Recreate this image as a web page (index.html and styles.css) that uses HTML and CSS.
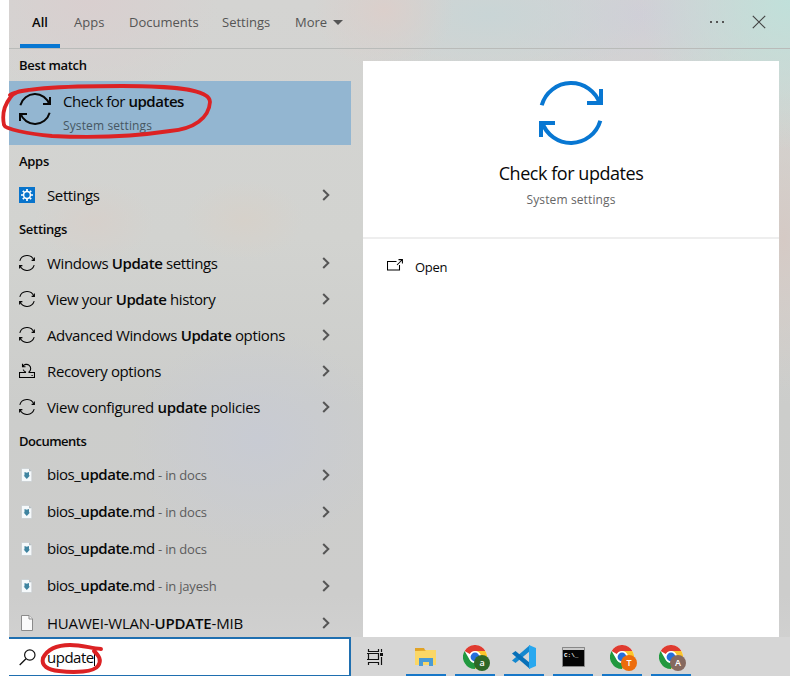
FILE: index.html
```html
<!DOCTYPE html>
<html lang="en">
<head>
<meta charset="utf-8">
<title>Search</title>
<link rel="stylesheet" href="styles.css">
</head>
<body>
<svg class="defs" width="0" height="0">
  <symbol id="sync" viewBox="0 0 16 16"><path d="M.8 5.8A7.5 7.500 0 0 1 14.900 5.200M15.200 10.200A7.500 7.500 0 0 1 1.100 10.800M15.400 2.600V5.400H12.600M.6 13.400V10.600H3.400" fill="none" stroke="currentColor" stroke-width="1.1"/></symbol>
  <symbol id="sync-large" viewBox="0 0 64 64"><path d="M2.7 24.3A30.500 30.500 0 0 1 61 23M61.3 39.7A30.500 30.500 0 0 1 3 41" fill="none" stroke="currentColor" stroke-width="4"/><path d="M60 8h4v16H48v-4h12zM4 56H0V40h16v4H4z" fill="currentColor"/></symbol>
  <symbol id="chevron" viewBox="0 0 8 12"><path d="M1.2 1L6.3 6L1.2 11" fill="none" stroke="#555" stroke-width="2"/></symbol>
  <symbol id="md" viewBox="0 0 12 14"><path d="M.5.5H8L10.8 3.3V13.5H.5z" fill="#f5f9fb" stroke="#c5cbce" stroke-width=".7"/><path d="M8 .5V3.3H10.8" fill="#b6bdc0"/><path d="M3.500 4l2.300.8L8 4v3.400h1L5.8 11 2.600 7.400h.9z" fill="#3f84a0"/></symbol>
  <symbol id="chrome" viewBox="0 0 24 24"><circle cx="12" cy="12" r="12" fill="#fff"/><path d="M1.6 6A12 12 0 0 1 22.4 6H12A6 6 0 0 0 6.8 9z" fill="#df3b30"/><path d="M1.6 6A12 12 0 0 0 12 24L17.2 15A6 6 0 0 1 6.8 15z" fill="#22983f"/><path d="M22.4 6A12 12 0 0 1 12 24L17.2 15A6 6 0 0 0 12 6z" fill="#fcc52c"/><circle cx="12" cy="12" r="5.7" fill="#fff"/><circle cx="12" cy="12" r="4.4" fill="#246edb"/></symbol>
</svg>

<div class="window">
  <header class="top">
    <nav class="tabs">
      <span class="tab active">All</span><span class="tab apps">Apps</span><span class="tab docs">Documents</span><span class="tab sets">Settings</span><span class="tab more">More<i class="caret"></i></span>
    </nav>
    <div class="controls">
      <svg width="16" height="4" viewBox="0 0 16 4"><path d="M1 1h2v2H1zM7 1h2v2H7zM13 1h2v2h-2z" fill="#555"/></svg>
      <svg width="14" height="14" viewBox="0 0 14 14"><path d="M.8.8l12.4 12.4M13.2.8L.8 13.2" stroke="#444" stroke-width="1.2"/></svg>
    </div>
  </header>

  <div class="body">
    <section class="results">
      <h2>Best match</h2>
      <div class="best">
        <svg width="32" height="32"><use href="#sync-large"/></svg>
        <div><p class="name">Check for <b>updates</b></p><p class="kind">System settings</p></div>
      </div>
      <h2>Apps</h2>
      <div class="row">
        <svg class="icon" width="16" height="16" viewBox="0 0 16 16"><path d="M0 0h16v16H0z" fill="#0874cc"/><circle cx="8" cy="8" r="3.4" fill="none" stroke="#fff" stroke-width="1.5"/><path d="M8 4V2M8 14v-2M4 8H2M14 8h-2M5.2 5.2L3.8 3.8M12.2 12.2l-1.4-1.4M5.2 10.8l-1.4 1.4M12.2 3.8l-1.4 1.4" stroke="#fff" stroke-width="1.7"/></svg>
        <span class="label">Settings</span><svg class="go" width="8" height="12"><use href="#chevron"/></svg>
      </div>
      <h2>Settings</h2>
      <div class="row"><svg class="icon" width="16" height="16"><use href="#sync"/></svg><span class="label">Windows <b>Update</b> settings</span><svg class="go" width="8" height="12"><use href="#chevron"/></svg></div>
      <div class="row"><svg class="icon" width="16" height="16"><use href="#sync"/></svg><span class="label">View your <b>Update</b> history</span><svg class="go" width="8" height="12"><use href="#chevron"/></svg></div>
      <div class="row"><svg class="icon" width="16" height="16"><use href="#sync"/></svg><span class="label">Advanced Windows <b>Update</b> options</span><svg class="go" width="8" height="12"><use href="#chevron"/></svg></div>
      <div class="row"><svg class="icon" width="16" height="16" viewBox="0 0 16 16"><path d="M3.500 9.500H.5v5h15v-5h-3M12.500 12.500h1.200M3.500.8v3h3M3.800 3.500A4.200 4.200 0 1 1 10 8.900V9.500h2.500M3.500 9.500H6.500V8.900A4.200 4.200 0 0 1 4.200 6.600" fill="none" stroke="#000" stroke-width="1.1"/></svg><span class="label">Recovery options</span><svg class="go" width="8" height="12"><use href="#chevron"/></svg></div>
      <div class="row"><svg class="icon" width="16" height="16"><use href="#sync"/></svg><span class="label wide">View configured <b>update</b> policies</span><svg class="go" width="8" height="12"><use href="#chevron"/></svg></div>
      <h2 class="tight">Documents</h2>
      <div class="row doc"><svg class="icon" width="12" height="14"><use href="#md"/></svg><span class="label">bios_<b>update</b>.md <small>- in docs</small></span><svg class="go" width="8" height="12"><use href="#chevron"/></svg></div>
      <div class="row doc"><svg class="icon" width="12" height="14"><use href="#md"/></svg><span class="label">bios_<b>update</b>.md <small>- in docs</small></span><svg class="go" width="8" height="12"><use href="#chevron"/></svg></div>
      <div class="row doc"><svg class="icon" width="12" height="14"><use href="#md"/></svg><span class="label">bios_<b>update</b>.md <small>- in docs</small></span><svg class="go" width="8" height="12"><use href="#chevron"/></svg></div>
      <div class="row doc"><svg class="icon" width="12" height="14"><use href="#md"/></svg><span class="label">bios_<b>update</b>.md <small>- in jayesh</small></span><svg class="go" width="8" height="12"><use href="#chevron"/></svg></div>
      <div class="row doc"><svg class="icon" width="12" height="16" viewBox="0 0 12 16"><path d="M.5.5H8L11.5 4V15.5H.5z" fill="#fafafa" stroke="#8b8b8b"/><path d="M8 .5V4h3.5" fill="#eee" stroke="#8b8b8b"/></svg><span class="label caps">HUAWEI-WLAN-<b>UPDATE</b>-MIB</span><svg class="go" width="8" height="12"><use href="#chevron"/></svg></div>
    </section>

    <main class="preview">
      <div class="hero">
        <svg width="64" height="64"><use href="#sync-large"/></svg>
        <h1>Check for updates</h1>
        <p>System settings</p>
      </div>
      <div class="open">
        <svg width="16" height="12" viewBox="0 0 16 12"><path d="M9.5 2.5H.5v8.500h12V6M10 6l5-5M11.500.6h3.900v3.900" fill="none" stroke="#000" stroke-width="1.050"/></svg>
        <span>Open</span>
      </div>
    </main>
  </div>

  <footer class="bottom">
    <div class="search">
      <svg width="17" height="17" viewBox="0 0 17 17"><circle cx="10.800" cy="6" r="5.200" fill="none" stroke="#111" stroke-width="1.200"/><path d="M7 9.700L.7 16" stroke="#111" stroke-width="1.300"/></svg>
      <span>update</span><i class="cursor"></i>
    </div>
    <div class="taskbar">
      <svg class="taskview" width="17" height="16" viewBox="0 0 17 16"><path d="M1.500 0v2.500h10V0M1.500 16v-2.500h10V16M1.500 4.500h10v6h-10zM0 4.500h1.500M0 10.500h1.500M14.500 0v3M14.500 8v8" fill="none" stroke="#111" stroke-width="1.200"/><path d="M13 4h3v3h-3z" fill="#111"/></svg>
      <div class="task folder"><svg width="22" height="20" viewBox="0 0 22 20"><path d="M0 1h9l1 2h11v15H0z" fill="#e1a326"/><path d="M0 4l10-.2L11 3h10v15H0z" fill="#fbd766"/><path d="M4 19v-8h14v8h-4v-4H8v4z" fill="#4a9bd5"/></svg></div>
      <div class="task"><svg width="24" height="24"><use href="#chrome"/></svg><span class="badge green">a</span></div>
      <div class="task"><svg width="24" height="24" viewBox="0 0 24 24"><path d="M18 0v6L3.500 18 0 15.500z" fill="#1588cf"/><path d="M0 8.500L3.500 6 18 18v6z" fill="#0870b8"/><path d="M17 0l7 3v18l-7 3z" fill="#29a8ef"/></svg></div>
      <div class="task"><svg width="23" height="20" viewBox="0 0 23 20"><path d="M.5.500h22v19H.5z" fill="#050505" stroke="#888"/><path d="M1 1h21v2H1z" fill="#ccc"/><text x="2" y="9.500" class="prompt">C:\_</text></svg></div>
      <div class="task"><svg width="24" height="24"><use href="#chrome"/></svg><span class="badge orange">T</span></div>
      <div class="task"><svg width="24" height="24"><use href="#chrome"/></svg><span class="badge brown">A</span></div>
    </div>
  </footer>
</div>

<svg class="ink" width="790" height="676" viewBox="0 0 790 676" fill="none" stroke="#dc2224" stroke-linecap="round" stroke-linejoin="round">
  <path d="M10 95C20 88 70 86 122 86C165 86 210 88 210 102C209 118 194 129 170 131C130 137 90 138 52 136C28 134 5 129 4 125C2 115 3 107 10 98C13 92 20 91 29 90" stroke-width="3.800"/>
  <path d="M101 649C90 648 82 645 70 645C55 645 47 650 43 658C41 666 48 670 59 671C75 673 94 672 98 666C102 660 99 656 94 651" stroke-width="4"/>
</svg>
</body>
</html>
```
FILE: styles.css
```css
* { box-sizing: border-box; }
body { margin: 0; width: 790px; height: 676px; overflow: hidden; background: #fff; font-family: "Open Sans", "Noto Sans", sans-serif; color: #080808; }
h1, h2, p { margin: 0; }
b { font-weight: 600; }
svg { display: block; flex: none; }
.defs { position: absolute; }
.window {
  margin-left: 9px; width: 781px; height: 676px; display: flex; flex-direction: column;
  background:
    radial-gradient(circle at 781px 0, #c0e0da 0, transparent 150px),
    radial-gradient(ellipse 70px 60px at 375px 10px, #dbcfcb, transparent),
    radial-gradient(ellipse 160px 70px at 480px 15px, #c9d5d6, transparent),
    radial-gradient(ellipse 140px 70px at 630px 15px, #d0cfd7, transparent),
    radial-gradient(ellipse 130px 100px at 80px 0, #d9cfcf, transparent),
    radial-gradient(ellipse 130px 110px at 250px 440px, #c8cbd3, transparent),
    radial-gradient(ellipse 60px 40px at 235px 220px, #d6d1ca, transparent),
    radial-gradient(ellipse 60px 40px at 85px 222px, #d6d0cb, transparent),
    radial-gradient(ellipse 50px 150px at 775px 240px, #d5cac5, transparent),
    linear-gradient(#d4d4d2, #d2d3d0 35%, #cccdcb 60%, #cdcdcc 88%, #d3d3d3);
}
.top { height: 49px; flex: none; display: flex; justify-content: space-between; border-bottom: 1px solid #b9bbb9; }
.tabs { display: flex; padding-left: 11px; }
.tab { height: 48px; line-height: 45px; font-size: 13px; color: #555; white-space: nowrap; }
.active { width: 40px; margin-right: 14px; text-align: center; font-weight: 600; color: #080808; border-bottom: 4px solid #0877d2; }
.apps { width: 55px; }
.docs { width: 93px; }
.sets { width: 73px; }
.more { display: flex; align-items: center; gap: 6px; height: 45px; }
.caret { border: 5px solid transparent; border-top-color: #555; border-bottom: 0; }
.controls { display: flex; align-items: center; gap: 27px; height: 44px; padding-right: 24px; }
.body { height: 588px; flex: none; display: flex; gap: 12px; }
.results { width: 342px; overflow: hidden; }
h2 { height: 32px; padding-left: 10px; font-size: 13px; line-height: 32px; font-weight: 600; letter-spacing: -.3px; }
.tight { letter-spacing: -.5px; }
.best { height: 64px; display: flex; padding: 12px 10px; gap: 12px; background: #93b6d1; }
.best p { white-space: nowrap; }
.best .name { font-size: 15px; line-height: 20px; margin-top: -2px; letter-spacing: -.47px; }
.best .kind { font-size: 12px; line-height: 18px; margin-top: 6px; color: #465662; letter-spacing: .12px; }
.row { height: 36px; display: flex; align-items: center; padding: 0 21px 0 10px; }
.label { flex: 1; margin-left: 12px; font-size: 15px; line-height: 22px; letter-spacing: -.38px; white-space: nowrap; padding-bottom: 1px; }
.wide { letter-spacing: -.34px; }
small { font-size: 13px; color: #5c5c5c; letter-spacing: -.3px; }
.doc { height: 37px; padding: 0 21px 1px 12px; }
.doc .label { margin-left: 14px; letter-spacing: -.47px; }
.doc .label small { letter-spacing: -.2px; }
.doc .caps { letter-spacing: -.2px; }
.go { margin-right: .5px; }
.preview { width: 416px; height: 576px; margin-top: 12px; background: #fff; }
.hero { height: 178px; display: flex; flex-direction: column; align-items: center; padding-top: 20px; border-bottom: 2px solid #eee; }
.hero svg { color: #0877d2; }
h1 { margin-top: 15px; font-size: 18px; font-weight: 400; line-height: 26px; letter-spacing: -.45px; }
.hero p { margin-top: 5px; font-size: 12px; line-height: 18px; color: #666; letter-spacing: .12px; }
.open { display: flex; align-items: center; gap: 12px; height: 54px; padding: 1px 24px 0; font-size: 13px; letter-spacing: -.3px; }
.open svg { margin-top: -4px; }
.bottom { height: 39px; flex: none; display: flex; }
.search { width: 342px; background: #fff; border: 2px solid #1f6fb0; border-left: 0; border-bottom-width: 1px; display: flex; align-items: center; padding-left: 10px; font-size: 15px; letter-spacing: -.5px; }
.search span { margin-left: 11px; }
.cursor { width: 1px; height: 18px; background: #000; }
.taskbar { flex: 1; display: flex; background: #d6d6d6; }
.taskview { margin: 12px 22px 0 16px; }
.task { position: relative; width: 40px; height: 39px; margin-right: 9px; padding-top: 2px; display: flex; justify-content: center; align-items: center; border-bottom: 2px solid #1777c8; }
.badge { position: absolute; left: 19px; top: 18px; width: 16px; height: 16px; border-radius: 50%; color: #fff; text-align: center; font-size: 9px; font-weight: 600; line-height: 15px; }
.green { background: #2f6826; }
.orange { background: #ed6c0c; }
.brown { background: #86695f; }
.prompt { font: bold 6px "Liberation Mono", monospace; fill: #fff; }
.ink { position: absolute; left: 0; top: 0; pointer-events: none; }
```
